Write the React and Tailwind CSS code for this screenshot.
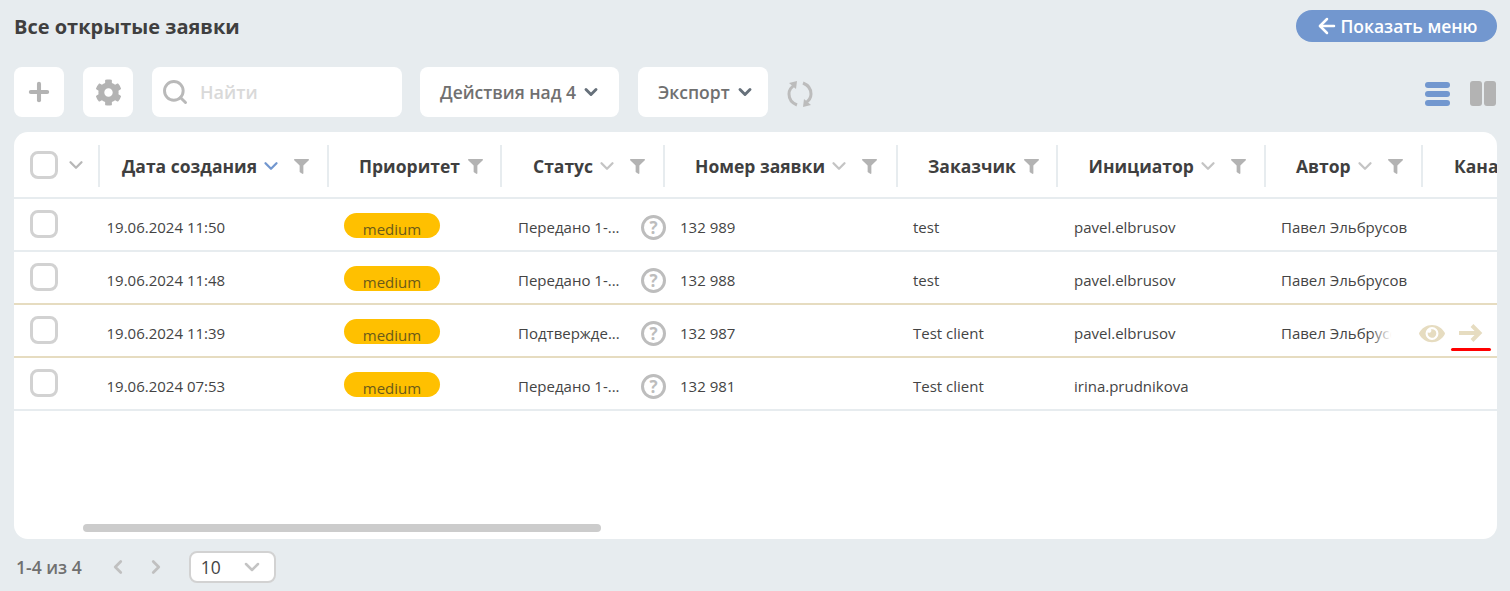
import React from 'react';
import { ChevronDown, ChevronLeft, ChevronRight, Search, Plus, ArrowLeft } from 'lucide-react';
import { FaCog, FaFilter, FaEye } from 'react-icons/fa';

const GRID = 'grid grid-cols-[85px_229px_173px_163px_233px_160px_208px_157px_100px]';

const rows = [
  { date: '19.06.2024 11:50', status: 'Передано 1-...', num: '132 989', client: 'test', init: 'pavel.elbrusov', author: 'Павел Эльбрусов' },
  { date: '19.06.2024 11:48', status: 'Передано 1-...', num: '132 988', client: 'test', init: 'pavel.elbrusov', author: 'Павел Эльбрусов', tan: true },
  { date: '19.06.2024 11:39', status: 'Подтвержде...', num: '132 987', client: 'Test client', init: 'pavel.elbrusov', author: 'Павел Эльбрусов', tan: true, hover: true },
  { date: '19.06.2024 07:53', status: 'Передано 1-...', num: '132 981', client: 'Test client', init: 'irina.prudnikova', author: '' },
];

function Sep() {
  return <span className="absolute -left-[1px] top-[13px] h-[42px] w-[2px] bg-[#e7ecef]" />;
}

function Head({ label, pl, sort, active, filter = true }) {
  return (
    <div className={`relative flex items-center h-full pt-[3px] ${pl}`}>
      <Sep />
      <span className="text-[17.5px] font-bold text-[#3f3f3f] whitespace-nowrap">{label}</span>
      {sort && <ChevronDown strokeWidth={2.5} className={`ml-[3px] shrink-0 w-[22px] h-[22px] ${active ? 'text-[#7297cf]' : 'text-[#c4c4c4]'}`} />}
      {filter && <FaFilter className={`shrink-0 w-[15px] h-[15px] text-[#b3b3b3] ${sort ? 'ml-[12px]' : 'ml-[8px]'}`} />}
    </div>
  );
}

function Checkbox() {
  return <div className="w-[28px] h-[28px] rounded-[8px] border-[3px] border-[#d2d2d2] bg-white" />;
}

function Row({ r }) {
  return (
    <div className={`${GRID} relative h-[53px] pt-[2px] items-center text-[15px] text-[#444] border-b-2 ${r.tan ? 'border-[#e6dcc0]' : 'border-[#e7ecef]'}`}>
      <div className="pl-[16px] -mt-[3px]"><Checkbox /></div>
      <div className="pl-[7.5px] pt-[3px]">{r.date}</div>
      <div className="pl-[16px]">
        <div className="w-[96px] h-[25px] rounded-full bg-[#ffc000] text-center text-[#6b5a1a] leading-[33px] overflow-hidden">medium</div>
      </div>
      <div className="relative pl-[17px] pt-[3px] h-full flex items-center whitespace-nowrap">
        {r.status}
        <span className="absolute left-[140px] top-[14px] w-[25px] h-[25px] rounded-full border-[3px] border-[#bdbdbd] flex items-center justify-center text-[17px] font-bold text-[#bdbdbd]">?</span>
      </div>
      <div className="pl-[16px] pt-[3px]">{r.num}</div>
      <div className="pl-[16px] pt-[3px]">{r.client}</div>
      <div className="pl-[17px] pt-[3px]">{r.init}</div>
      <div className="pl-[16px] pt-[3px] whitespace-nowrap">{r.author}</div>
      <div />
      {r.hover && (
        <div className="absolute right-0 top-0 h-full w-[127px] bg-gradient-to-r from-transparent via-white via-[17%] to-white">
          <FaEye className="absolute left-[49px] top-[17px] w-[26px] h-[23px] text-[#e6dcc0]" />
          <svg viewBox="0 0 24 18" className="absolute left-[89px] top-[19px] w-[24px] h-[18px] text-[#e6dcc0]" fill="none" stroke="currentColor" strokeWidth="4">
            <path d="M0 9H21M13 1.5L20.5 9L13 16.5" />
          </svg>
          <span className="absolute left-[81px] top-[43px] w-[40px] h-[3px] rounded-full bg-[#ff0000]" />
        </div>
      )}
    </div>
  );
}

export default function App() {
  return (
    <div className="w-[1510px] h-[591px] overflow-hidden bg-[#e7ecef] font-['Open_Sans',sans-serif] flex flex-col pl-[14px] pr-[13px]">
      <div className="h-[67px] flex items-start justify-between pt-[10px]">
        <h1 className="text-[20px] font-bold text-[#3f3f3f] leading-[34px]">Все открытые заявки</h1>
        <button className="w-[201px] h-[32px] rounded-full bg-[#7297cf] text-white text-[17.5px] font-semibold flex items-center justify-center gap-[1px]">
          <ArrowLeft strokeWidth={2.5} className="w-[24px] h-[24px]" />
          Показать меню
        </button>
      </div>

      <div className="h-[50px] flex items-center">
        <button className="w-[50px] h-[50px] rounded-[8px] bg-white flex items-center justify-center">
          <Plus strokeWidth={3.5} className="w-[28px] h-[28px] text-[#b3b3b3]" />
        </button>
        <button className="ml-[19px] w-[50px] h-[50px] rounded-[8px] bg-white flex items-center justify-center">
          <FaCog className="w-[27px] h-[27px] text-[#b3b3b3]" />
        </button>
        <div className="ml-[19px] w-[250px] h-[50px] rounded-[8px] bg-white flex items-center pl-[9px]">
          <Search strokeWidth={2.5} className="w-[28px] h-[28px] text-[#b9b9b9]" />
          <span className="ml-[11px] text-[18px] font-semibold text-[#d9d9d9]">Найти</span>
        </div>
        <button className="ml-[18px] w-[199px] h-[50px] rounded-[8px] bg-white flex items-center pl-[20px] text-[17.5px] font-semibold text-[#707070]">
          Действия над 4
          <ChevronDown strokeWidth={3.5} className="ml-[5px] w-[20px] h-[20px] text-[#66707a]" />
        </button>
        <button className="ml-[19px] w-[130px] h-[50px] rounded-[8px] bg-white flex items-center pl-[20px] text-[17.5px] font-semibold text-[#707070]">
          Экспорт
          <ChevronDown strokeWidth={3.5} className="ml-[5px] w-[20px] h-[20px] text-[#66707a]" />
        </button>
        <svg viewBox="0 0 26 26" className="ml-[19px] mt-[4px] w-[26px] h-[26px] text-[#bcbcbc]" fill="none" stroke="currentColor" strokeWidth="3">
          <path d="M10 24C5 22 2 18 2 13C2 9 4 6 8 4" />
          <path d="M2 2L10 0L9 8Z" fill="currentColor" stroke="none" />
          <g transform="rotate(180 13 13)">
            <path d="M10 24C5 22 2 18 2 13C2 9 4 6 8 4" />
            <path d="M2 2L10 0L9 8Z" fill="currentColor" stroke="none" />
          </g>
        </svg>
        <div className="ml-auto mr-[1px] mt-[3px] flex items-center gap-[20px]">
          <div className="w-[25px] flex flex-col gap-[3px]">
            <span className="h-[6px] rounded-full bg-[#7297cf]" />
            <span className="h-[6px] rounded-full bg-[#7297cf]" />
            <span className="h-[6px] rounded-full bg-[#7297cf]" />
          </div>
          <div className="flex gap-[2px]">
            <span className="w-[12px] h-[25px] rounded-[3px] bg-[#b3b3b3]" />
            <span className="w-[12px] h-[25px] rounded-[3px] bg-[#b3b3b3]" />
          </div>
        </div>
      </div>

      <div className="relative mt-[15px] h-[407px] rounded-[14px] bg-white overflow-hidden">
        <div className={`${GRID} h-[67px] border-b-2 border-[#e7ecef]`}>
          <div className="flex items-center pl-[16px]">
            <Checkbox />
            <ChevronDown strokeWidth={2.5} className="ml-[7px] w-[22px] h-[22px] text-[#b8b8b8]" />
          </div>
          <Head label="Дата создания" pl="pl-[23px]" sort active />
          <Head label="Приоритет" pl="pl-[31px]" />
          <Head label="Статус" pl="pl-[32px]" sort />
          <Head label="Номер заявки" pl="pl-[31px]" sort />
          <Head label="Заказчик" pl="pl-[31px]" />
          <Head label="Инициатор" pl="pl-[31.5px]" sort />
          <Head label="Автор" pl="pl-[31px]" sort />
          <Head label="Канал" pl="pl-[32px]" filter={false} />
        </div>
        {rows.map((r) => <Row key={r.num} r={r} />)}
        <div className="absolute left-[69px] top-[392px] w-[518px] h-[8px] rounded-full bg-[#cccccc]" />
      </div>

      <div className="flex-1 flex items-start pt-[12px] pl-[2px]">
        <div className="h-[32px] flex items-center">
          <span className="text-[17.5px] font-semibold text-[#707070]">1-4 из 4</span>
          <ChevronLeft strokeWidth={3} className="ml-[25px] w-[22px] h-[22px] text-[#c0c0c0]" />
          <ChevronRight strokeWidth={3} className="ml-[16px] w-[22px] h-[22px] text-[#c0c0c0]" />
          <div className="ml-[22px] w-[87px] h-[32px] rounded-[8px] border-2 border-[#d2d2d2] bg-white flex items-center pl-[10px]">
            <span className="text-[17.5px] font-medium text-[#444]">10</span>
            <ChevronDown strokeWidth={2.5} className="ml-[19px] w-[24px] h-[24px] text-[#c4c4c4]" />
          </div>
        </div>
      </div>
    </div>
  );
}
